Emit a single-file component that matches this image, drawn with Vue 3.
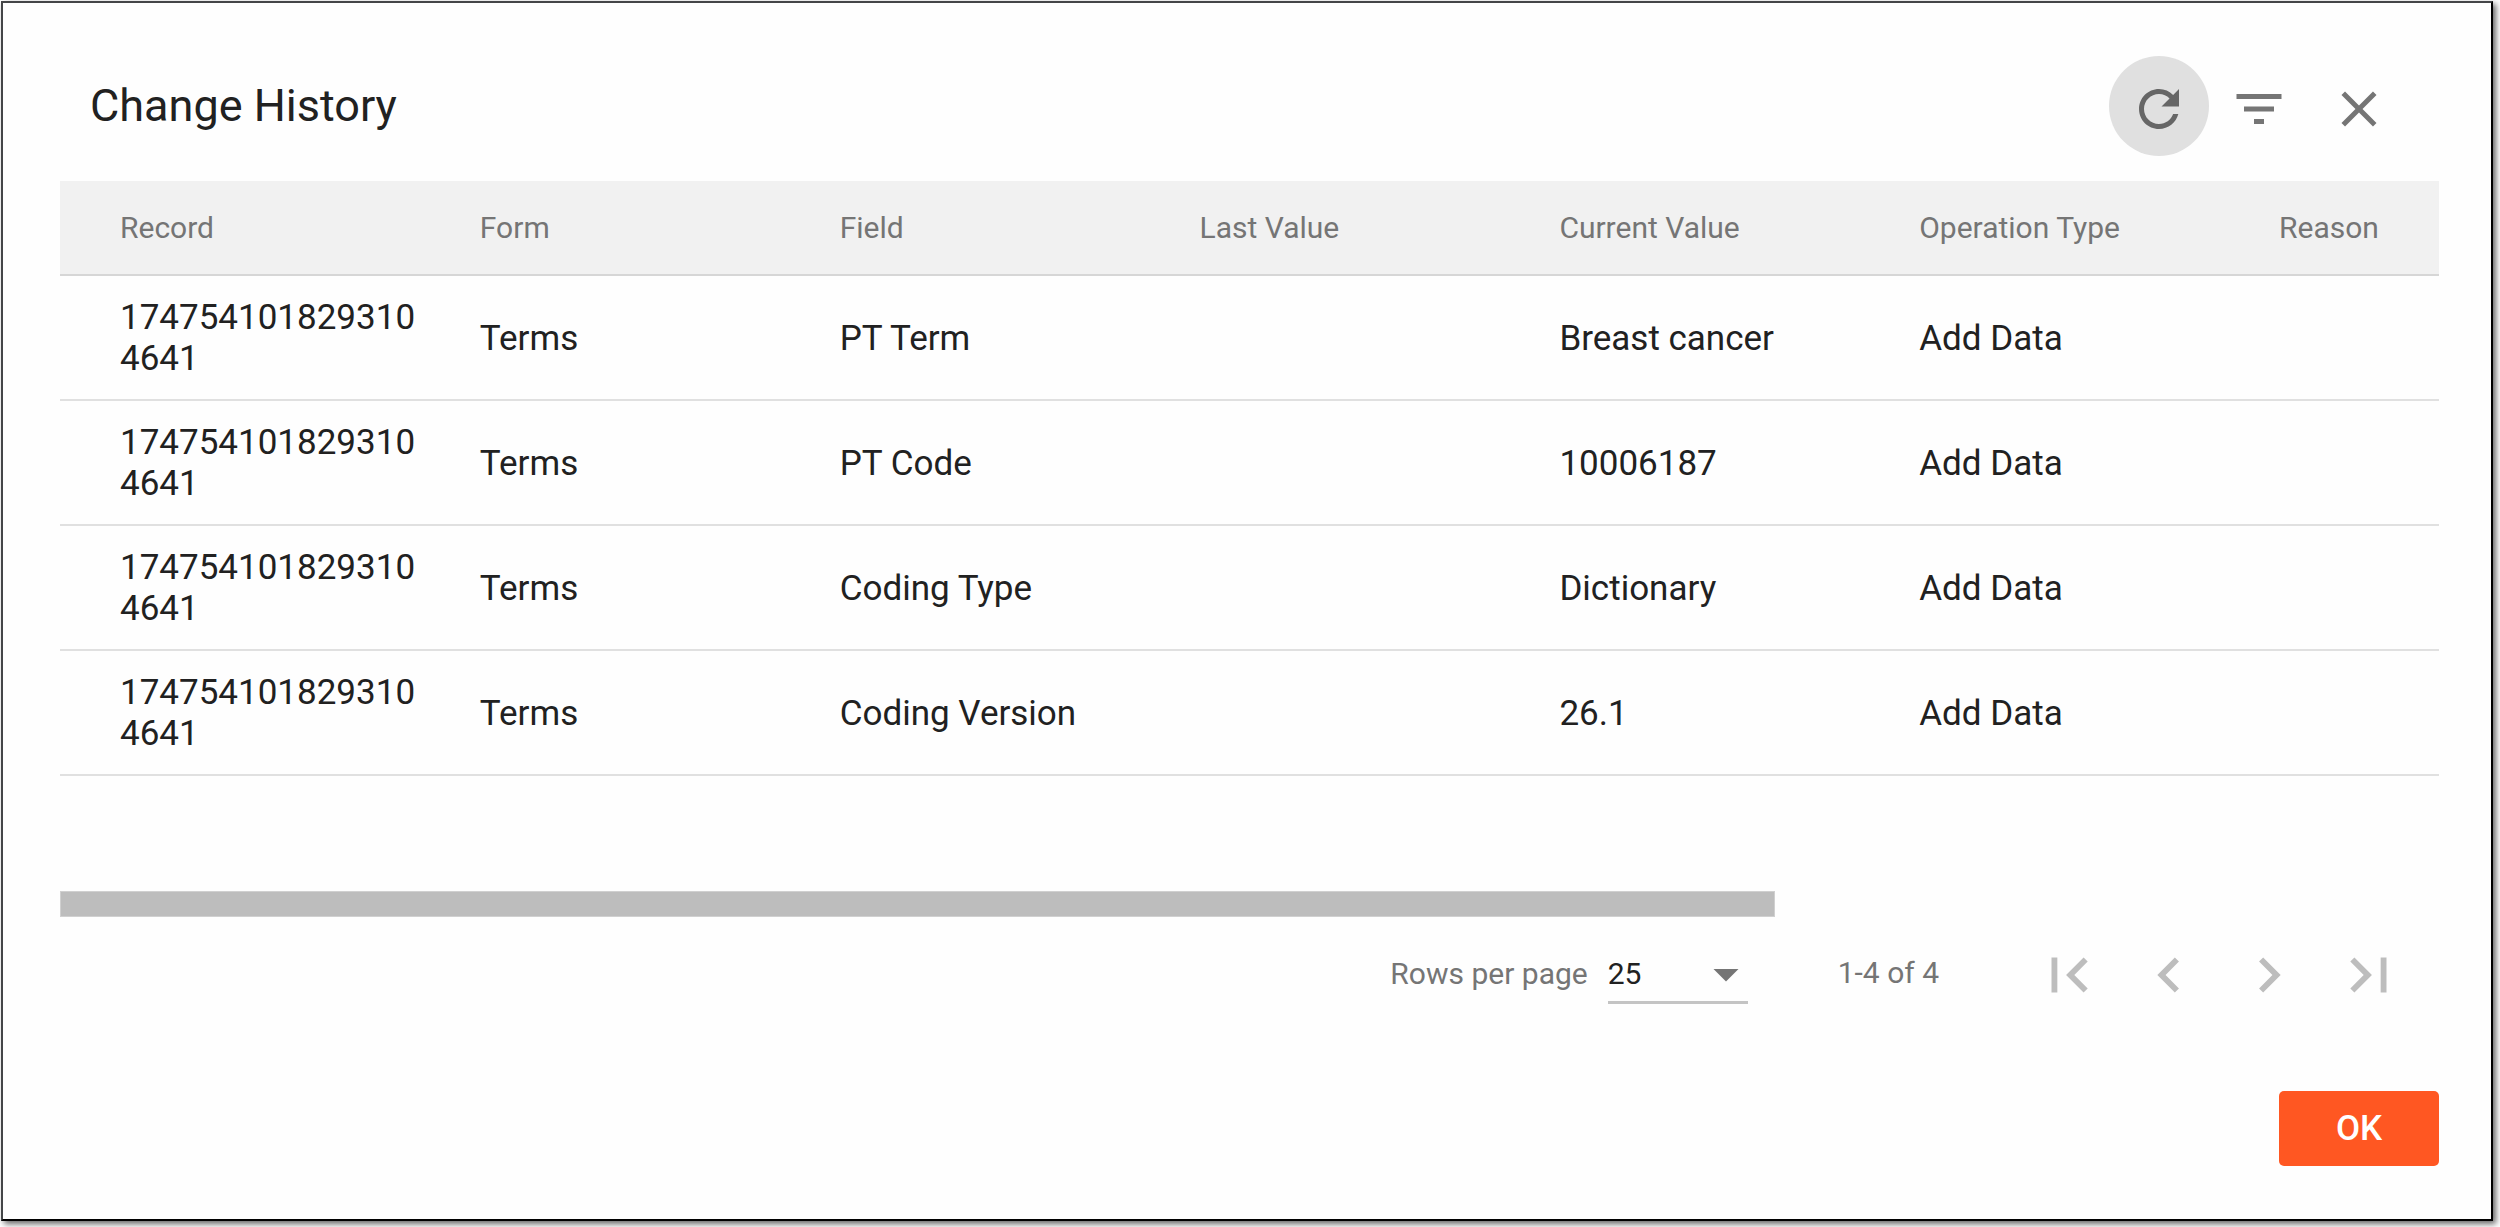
<script setup>
import { ref } from 'vue'

const columns = ['Record', 'Form', 'Field', 'Last Value', 'Current Value', 'Operation Type', 'Reason']
const rows = [
  ['1747541018293104641', 'Terms', 'PT Term', '', 'Breast cancer', 'Add Data', ''],
  ['1747541018293104641', 'Terms', 'PT Code', '', '10006187', 'Add Data', ''],
  ['1747541018293104641', 'Terms', 'Coding Type', '', 'Dictionary', 'Add Data', ''],
  ['1747541018293104641', 'Terms', 'Coding Version', '', '26.1', 'Add Data', ''],
]
const actions = [
  {
    name: 'Refresh',
    active: true,
    path: 'M17.65 6.35C16.2 4.9 14.21 4 12 4c-4.42 0-7.99 3.58-7.99 8s3.57 8 7.99 8c3.73 0 6.84-2.55 7.73-6h-2.08c-.82 2.33-3.04 4-5.65 4-3.31 0-6-2.69-6-6s2.69-6 6-6c1.66 0 3.14.69 4.22 1.78L13 11h7V4l-2.35 2.35z',
  },
  { name: 'Filter', path: 'M10 18h4v-2h-4v2zM3 6v2h18V6H3zm3 7h12v-2H6v2z' },
  {
    name: 'Close',
    path: 'M19 6.41L17.59 5 12 10.59 6.41 5 5 6.41 10.59 12 5 17.59 6.41 19 12 13.41 17.59 19 19 17.59 13.41 12z',
  },
]
const pages = [
  { name: 'First page', path: 'M18.41 16.59L13.82 12l4.59-4.59L17 6l-6 6 6 6zM6 6h2v12H6z' },
  { name: 'Previous page', path: 'M15.41 7.41L14 6l-6 6 6 6 1.41-1.41L10.83 12z' },
  { name: 'Next page', path: 'M10 6L8.59 7.41 13.17 12l-4.58 4.59L10 18l6-6z' },
  { name: 'Last page', path: 'M5.59 7.41L10.18 12l-4.59 4.59L7 18l6-6-6-6zM16 6h2v12h-2z' },
]
const pageSize = ref('25')
</script>

<template>
  <section class="dialog" role="dialog" aria-labelledby="dialog-title">
    <header class="top">
      <h1 id="dialog-title">Change History</h1>
      <div class="actions">
        <button
          v-for="a in actions"
          :key="a.name"
          type="button"
          class="action"
          :class="{ active: a.active }"
          :aria-label="a.name"
        >
          <svg viewBox="0 0 24 24" aria-hidden="true"><path :d="a.path" /></svg>
        </button>
      </div>
    </header>

    <div class="scroller">
      <table>
        <thead>
          <tr>
            <th v-for="c in columns" :key="c" scope="col">{{ c }}</th>
          </tr>
        </thead>
        <tbody>
          <tr v-for="(row, i) in rows" :key="i">
            <td v-for="(cell, j) in row" :key="j">{{ cell }}</td>
          </tr>
        </tbody>
      </table>
    </div>
    <div class="track"><div class="thumb"></div></div>

    <div class="pager">
      <label for="page-size">Rows per page</label>
      <div class="select">
        <select id="page-size" v-model="pageSize">
          <option>25</option>
          <option>50</option>
        </select>
        <svg viewBox="0 0 24 24" aria-hidden="true"><path d="M7 10l5 5 5-5z" /></svg>
      </div>
      <span class="range">1-4 of 4</span>
      <button v-for="p in pages" :key="p.name" type="button" class="page" :aria-label="p.name" disabled>
        <svg viewBox="0 0 24 24" aria-hidden="true"><path :d="p.path" /></svg>
      </button>
    </div>

    <footer class="bottom">
      <button type="button" class="ok">OK</button>
    </footer>
  </section>
</template>

<style>
body {
  background: #fff;
}
#app {
  display: flow-root;
}
</style>

<style scoped>
* {
  box-sizing: border-box;
}
.dialog {
  margin: 1px 7px 6px 1px;
  padding: 53px 52px 53px 57px;
  border: 2px solid #000;
  border-top-color: #444648;
  border-left-color: #444648;
  background: #fefefe;
  box-shadow: 3px 3px 6px rgba(0, 0, 0, 0.6);
  font-family: Roboto, sans-serif;
  font-size: 35px;
  line-height: 41px;
  color: #212121;
}
button {
  padding: 0;
  border: 0;
  background: none;
  font: inherit;
}
svg {
  display: block;
  fill: currentColor;
}
.top {
  display: flex;
  align-items: center;
  justify-content: space-between;
  margin-bottom: 25px;
  padding: 0 30px;
}
h1 {
  margin: 0;
  font-size: 45px;
  font-weight: 400;
  line-height: 60px;
}
.actions {
  display: flex;
}
.action {
  display: flex;
  justify-content: center;
  align-items: center;
  width: 100px;
  height: 100px;
  padding-top: 5px;
  border-radius: 50%;
  color: #757575;
}
.action svg {
  width: 60px;
  height: 60px;
}
.action.active {
  background: #e0e0e0;
  color: #666;
}
.scroller {
  min-height: 710px;
  overflow: hidden;
}
table {
  width: 2519px;
  table-layout: fixed;
  border-collapse: separate;
  border-spacing: 0;
}
th,
td {
  padding: 0 0 0 60px;
  text-align: left;
  vertical-align: middle;
  border-bottom: 2px solid #e0e0e0;
}
th {
  height: 95px;
  background: #f1f1f1;
  border-bottom-color: #d6d6d6;
  color: #757575;
  font-size: 30px;
  font-weight: 400;
}
td {
  height: 125px;
  padding-top: 1px;
  overflow-wrap: anywhere;
}
.track {
  height: 26px;
}
.thumb {
  width: 72.1%;
  height: 100%;
  border: 1px solid #d0d0d0;
  background: #bdbdbd;
}
.pager {
  display: flex;
  align-items: center;
  justify-content: flex-end;
  margin-top: 8px;
  padding-right: 20px;
  color: #757575;
  font-size: 30px;
}
.pager label {
  padding-bottom: 4px;
}
.select {
  display: grid;
  align-items: center;
  width: 140px;
  height: 60px;
  margin: 0 0 2px 20px;
  border-bottom: 3px solid #c4c4c4;
}
select {
  grid-area: 1 / 1;
  width: 100%;
  height: 57px;
  padding: 0 0 2px;
  border: 0;
  appearance: none;
  background: none;
  color: #212121;
  font: inherit;
}
.select svg {
  grid-area: 1 / 1;
  justify-self: end;
  width: 60px;
  height: 60px;
  margin-right: -8px;
  pointer-events: none;
}
.range {
  margin: 0 80px 0 90px;
  padding-bottom: 6px;
}
.page {
  display: flex;
  align-items: center;
  justify-content: center;
  width: 100px;
  height: 100px;
  color: #bdbdbd;
}
.page svg {
  width: 70px;
  height: 70px;
}
.bottom {
  display: flex;
  justify-content: flex-end;
  margin-top: 66px;
}
.ok {
  width: 160px;
  height: 75px;
  border-radius: 5px;
  background: #ff5722;
  color: #fff;
  font-weight: 500;
}
</style>
